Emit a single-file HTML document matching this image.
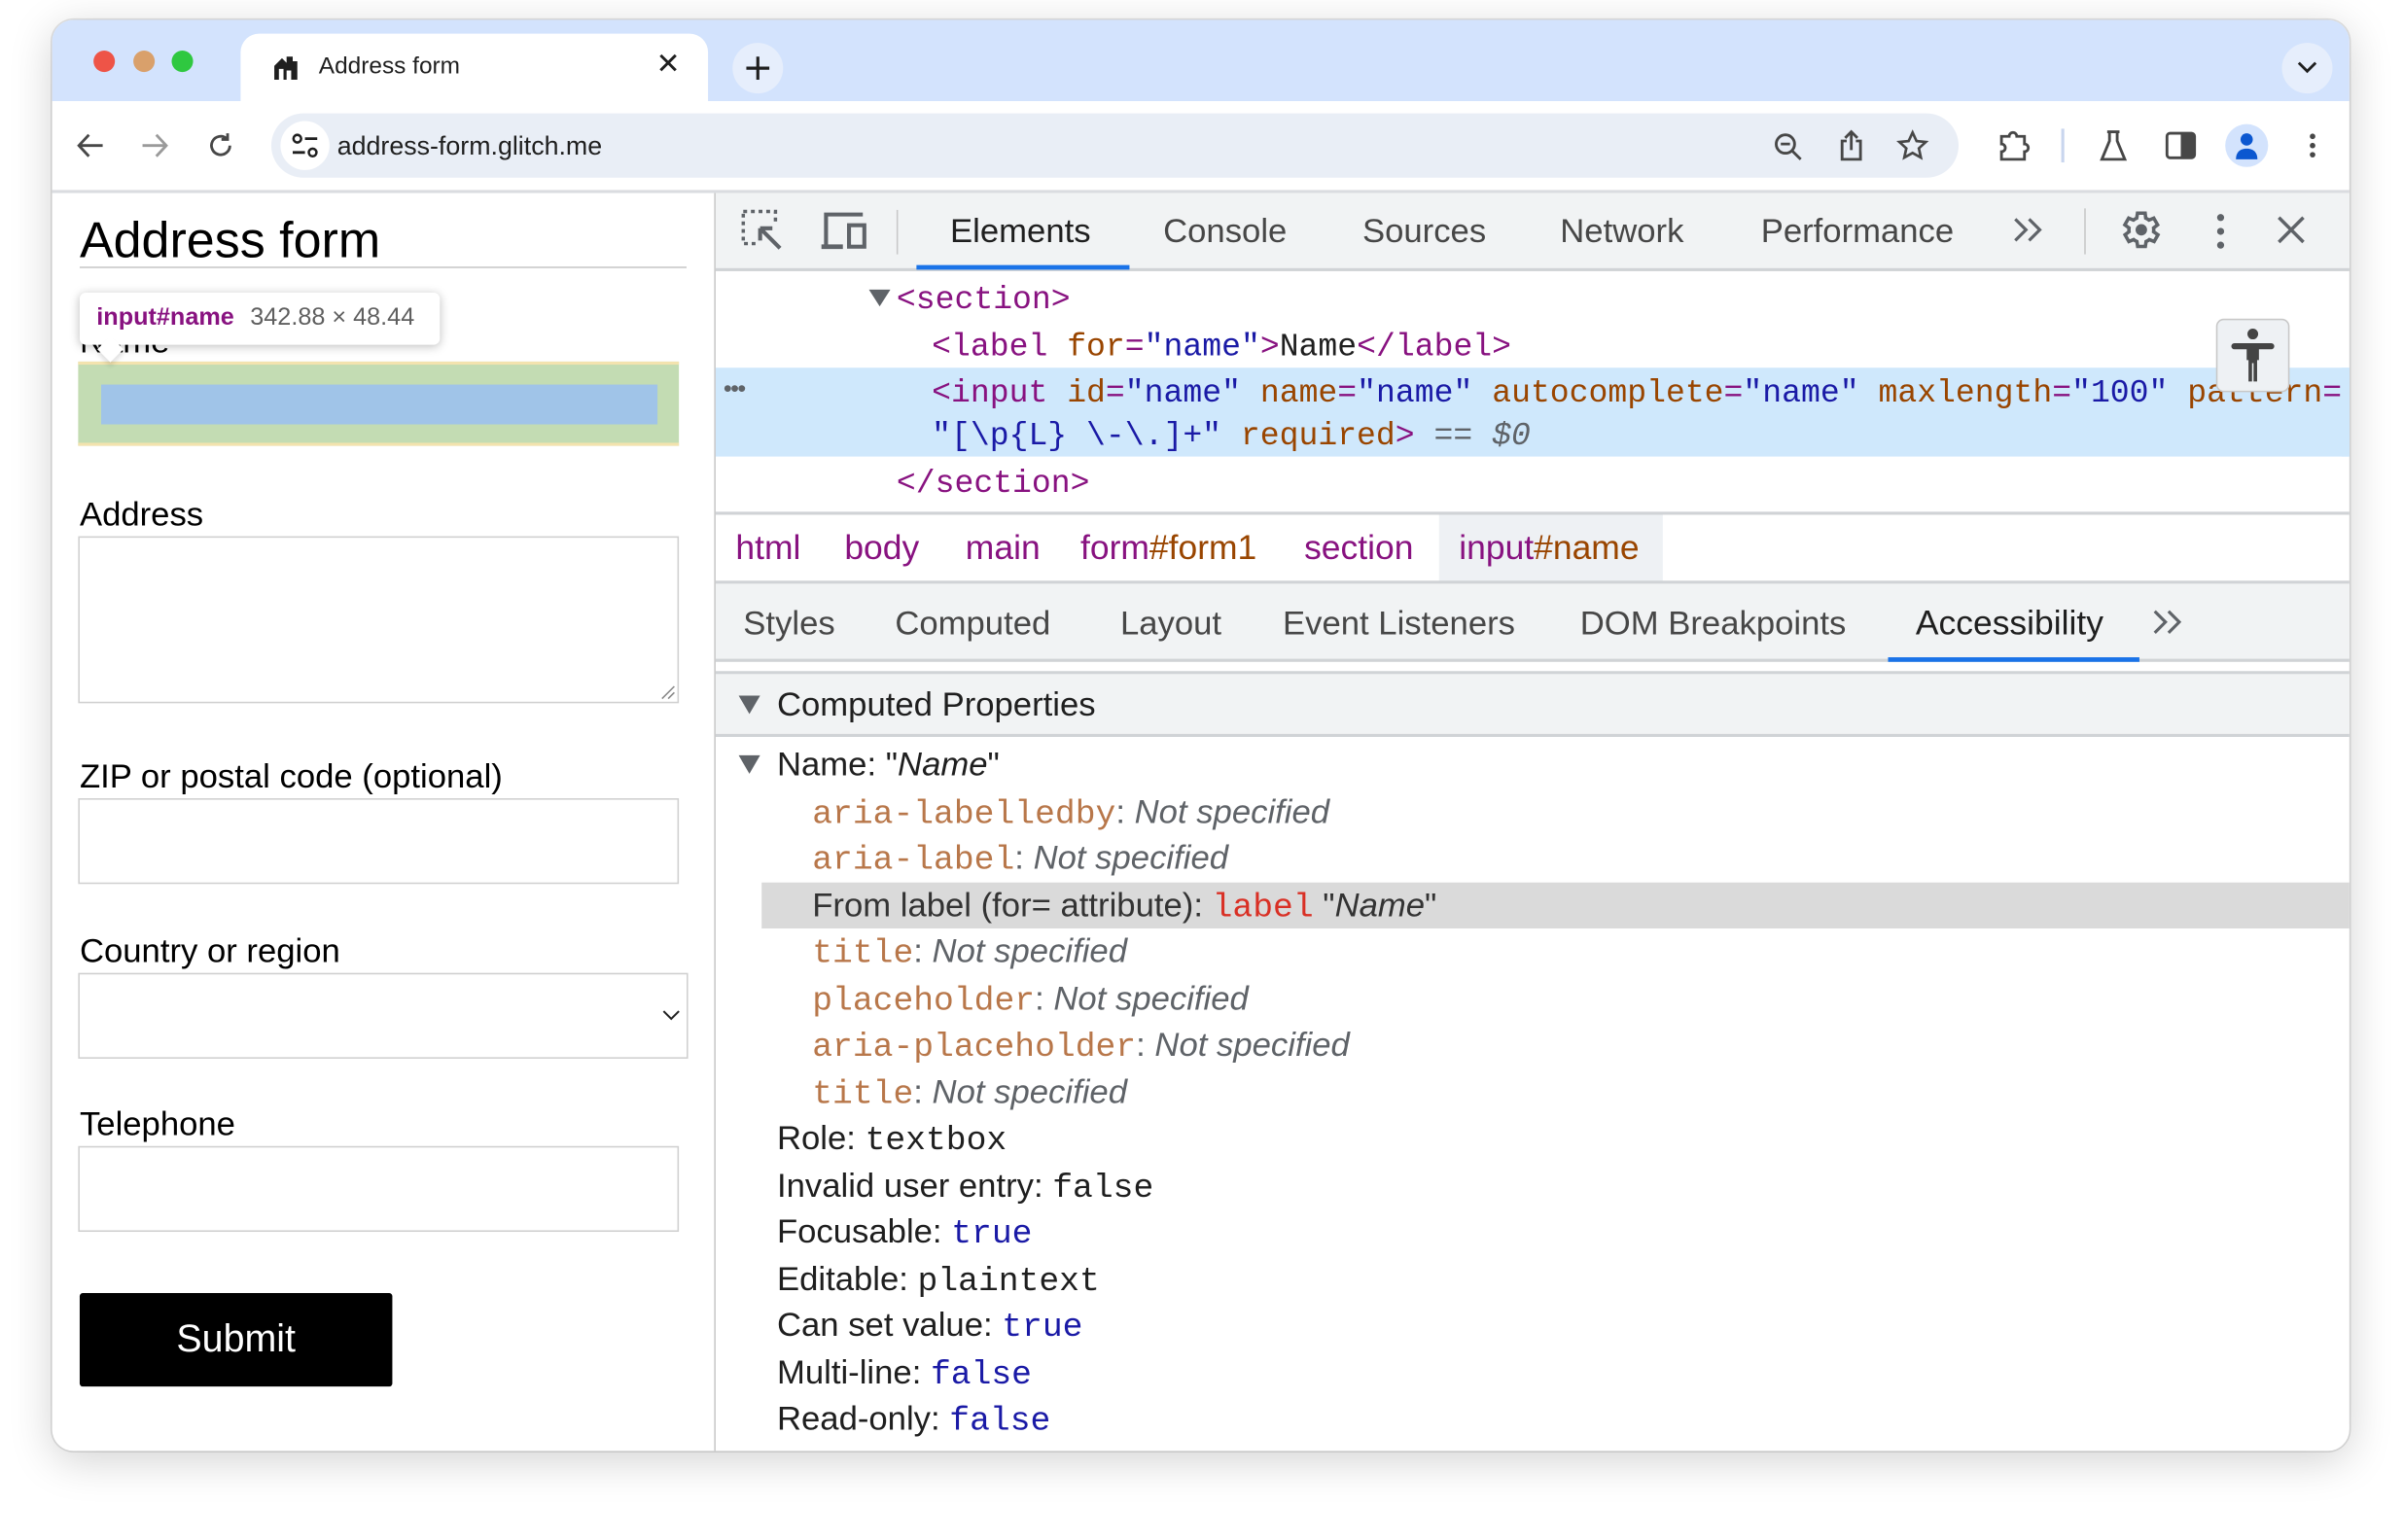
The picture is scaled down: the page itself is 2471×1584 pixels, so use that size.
<!DOCTYPE html>
<html><head><meta charset="utf-8">
<style>
html,body{margin:0;padding:0;background:#fff;width:2471px;height:1583px;overflow:hidden}
#s{position:absolute;left:0;top:0;width:1568px;height:1005px;transform:scale(1.57589);transform-origin:0 0;font-family:"Liberation Sans",Arial,sans-serif}
.a{position:absolute;white-space:nowrap}
.m{font-family:"Liberation Mono","DejaVu Sans Mono",monospace}
.tg{color:#881280}.an{color:#994500}.av{color:#1a1aa6}
.pn{color:#b8774a}.ns{color:#5f6368;font-style:italic}
.bl{color:#1a1aa6}
.dt{color:#474747;font-size:22px;line-height:30px}
.row{font-size:22px;line-height:30px;color:#1f1f1f}
.bc{font-size:22.5px;line-height:30px;top:343px}
.inp{position:absolute;border:1px solid #d0d0d0;background:#fff}
.lbl{position:absolute;font-size:22px;color:#000;line-height:26px}
svg{position:absolute;overflow:visible}
</style></head><body>
<div id="s">
<div class="a" style="left:34px;top:13px;width:1499px;height:934px;border-radius:14px;background:#fff;box-shadow:0 6px 28px rgba(0,0,0,.18),0 0 0 1px #e3e3e3;overflow:hidden">
 <div class="a" style="left:0;top:0;width:1499px;height:53px;background:#d3e3fd"></div>
</div>
<div class="a" style="left:61px;top:33px;width:14px;height:14px;border-radius:50%;background:#ee5447"></div>
<div class="a" style="left:87px;top:33px;width:14px;height:14px;border-radius:50%;background:#d9a06b"></div>
<div class="a" style="left:112px;top:33px;width:14px;height:14px;border-radius:50%;background:#2fc840"></div>
<div class="a" style="left:157px;top:22px;width:305px;height:46px;background:#fff;border-radius:12px 12px 0 0"></div>
<svg style="left:178px;top:35px" width="18" height="18" viewBox="0 0 18 18"><path d="M1 17V8l5-5 3 3V2h4v3h3v12h-4v-6H9v6H7v-7H4v7z" fill="#1f1f1f"/></svg>
<div class="a" style="left:208px;top:35px;font-size:15.5px;line-height:18px;color:#1f1f1f">Address form</div>
<div class="a" style="left:428px;top:32px;font-size:19px;line-height:22px;color:#1f1f1f">✕</div>
<div class="a" style="left:478px;top:28px;width:33px;height:33px;border-radius:50%;background:#e6eefc"></div>
<svg style="left:486px;top:36px" width="17" height="17"><path d="M8.5 1v15M1 8.5h15" stroke="#1f1f1f" stroke-width="2"/></svg>
<div class="a" style="left:1489px;top:28px;width:33px;height:33px;border-radius:50%;background:#e6eefc"></div>
<svg style="left:1499px;top:40px" width="13" height="8"><path d="M1 1l5.5 5.5L12 1" stroke="#1f1f1f" stroke-width="1.8" fill="none"/></svg>
<svg style="left:50px;top:86px" width="18" height="18"><path d="M17 9H2M8 2L1.5 9 8 16" stroke="#474747" stroke-width="1.8" fill="none"/></svg>
<svg style="left:92px;top:86px" width="18" height="18"><path d="M1 9h15M10 2l6.5 7L10 16" stroke="#9a9a9a" stroke-width="1.8" fill="none"/></svg>
<svg style="left:135px;top:86px" width="18" height="18"><path d="M15 9A6 6 0 1 1 13 4.5M13.5 1v4h-4" stroke="#474747" stroke-width="1.8" fill="none"/></svg>
<div class="a" style="left:177px;top:74px;width:1101px;height:42px;border-radius:21px;background:#e9eef6"></div>
<div class="a" style="left:183px;top:79px;width:32px;height:32px;border-radius:50%;background:#fff"></div>
<svg style="left:190px;top:87px" width="18" height="16"><circle cx="4" cy="3.5" r="2.5" stroke="#1f1f1f" stroke-width="1.6" fill="none"/><path d="M9 3.5h8M1 12.5h8" stroke="#1f1f1f" stroke-width="1.8"/><circle cx="14" cy="12.5" r="2.5" stroke="#1f1f1f" stroke-width="1.6" fill="none"/></svg>
<div class="a" style="left:220px;top:86px;font-size:17px;line-height:20px;color:#1f1f1f">address-form.glitch.me</div>
<svg style="left:1157px;top:86px" width="20" height="20"><circle cx="8" cy="8" r="6" stroke="#474747" stroke-width="1.8" fill="none"/><path d="M12.5 12.5L18 18M5 8h6" stroke="#474747" stroke-width="1.8"/></svg>
<svg style="left:1199px;top:84px" width="18" height="22"><path d="M6 8H3v12h12V8h-3M9 14V2M5 6l4-4 4 4" stroke="#474747" stroke-width="1.8" fill="none"/></svg>
<svg style="left:1238px;top:85px" width="20" height="20"><path d="M10 1.5l2.6 5.6 6 .6-4.5 4.1 1.3 6L10 14.8 4.6 17.8l1.3-6L1.4 7.7l6-.6z" stroke="#474747" stroke-width="1.7" fill="none"/></svg>
<svg style="left:1303px;top:84px" width="22" height="22"><path d="M2 5h5a2.5 2.5 0 0 1 5 0h5v5a2.5 2.5 0 0 1 0 5v5H2v-5a2.5 2.5 0 0 0 0-5z" stroke="#474747" stroke-width="1.8" fill="none" transform="translate(1,0)"/></svg>
<div class="a" style="left:1345px;top:84px;width:2px;height:22px;background:#c9d6ee"></div>
<svg style="left:1370px;top:85px" width="18" height="20"><path d="M5 1h8M6.5 1v6L1.5 19h15L11.5 7V1" stroke="#474747" stroke-width="1.8" fill="none"/></svg>
<svg style="left:1413px;top:86px" width="20" height="18"><rect x="1" y="1" width="18" height="16" rx="2" stroke="#474747" stroke-width="1.8" fill="none"/><rect x="10" y="1" width="9" height="16" fill="#474747"/></svg>
<div class="a" style="left:1452px;top:81px;width:28px;height:28px;border-radius:50%;background:#d3e3fd"></div>
<svg style="left:1456px;top:85px" width="20" height="20"><circle cx="10" cy="6" r="4" fill="#0b57d0"/><path d="M3 19c0-5 3-7 7-7s7 2 7 7z" fill="#0b57d0"/></svg>
<svg style="left:1505px;top:86px" width="8" height="20"><circle cx="4" cy="3" r="1.8" fill="#474747"/><circle cx="4" cy="9" r="1.8" fill="#474747"/><circle cx="4" cy="15" r="1.8" fill="#474747"/></svg>
<div class="a" style="left:34px;top:124px;width:1499px;height:2px;background:#dadce0"></div>

<div class="a" style="left:52px;top:137px;font-size:33px;line-height:40px;color:#000">Address form</div>
<div class="a" style="left:52px;top:174px;width:396px;height:1px;background:#c8c8c8"></div>
<div class="lbl" style="left:52px;top:210px">Name</div>
<div class="a" style="left:51px;top:236px;width:392px;height:55px;background:#c3dcb3;border-top:2px solid #f3e3ae;border-bottom:2px solid #f3e3ae;box-sizing:border-box"></div>
<div class="a" style="left:66px;top:251px;width:363px;height:26px;background:#a0c4e8"></div>
<div class="a" style="left:52px;top:191px;width:235px;height:34px;background:#fff;border-radius:4px;box-shadow:0 1px 6px rgba(0,0,0,.25)"></div>
<div class="a" style="left:66px;top:222px;width:12px;height:12px;background:#fff;transform:rotate(45deg);box-shadow:2px 2px 3px rgba(0,0,0,.12)"></div>
<div class="a" style="left:63px;top:199px;font-size:16px;line-height:18px"><b style="color:#881280">input#name</b> <span style="color:#5f5f5f;margin-left:6px">342.88 × 48.44</span></div>
<div class="lbl" style="left:52px;top:323px">Address</div>
<div class="inp" style="left:51px;top:350px;width:390px;height:107px"></div>
<svg style="left:431px;top:447px" width="10" height="10"><path d="M1 9l8-8M5 9l4-4" stroke="#888" stroke-width="1"/></svg>
<div class="lbl" style="left:52px;top:494px">ZIP or postal code (optional)</div>
<div class="inp" style="left:51px;top:521px;width:390px;height:54px"></div>
<div class="lbl" style="left:52px;top:608px">Country or region</div>
<div class="inp" style="left:51px;top:635px;width:396px;height:54px"></div>
<svg style="left:432px;top:659px" width="12" height="7"><path d="M1 1l5 5 5-5" stroke="#222" stroke-width="1.3" fill="none"/></svg>
<div class="lbl" style="left:52px;top:721px">Telephone</div>
<div class="inp" style="left:51px;top:748px;width:390px;height:54px"></div>
<div class="a" style="left:52px;top:844px;width:204px;height:61px;background:#000;border-radius:2px;color:#fff;font-size:25px;line-height:61px;text-align:center">Submit</div>

<div class="a" style="left:466px;top:126px;width:1px;height:821px;background:#c8c8c8"></div>
<div class="a" style="left:467px;top:126px;width:1066px;height:50px;background:#f1f3f4"></div>
<div class="a" style="left:467px;top:175px;width:1066px;height:2px;background:#d0d3d6"></div>
<svg style="left:484px;top:137px" width="28" height="28"><rect x="1" y="1" width="21" height="21" stroke="#5f6368" stroke-width="2.2" stroke-dasharray="2.5 2.5" fill="none"/><rect x="9" y="9" width="18" height="18" fill="#f1f3f4"/><path d="M12 12l13 13M12 12v8M12 12h8" stroke="#5f6368" stroke-width="2.6" fill="none"/></svg>
<svg style="left:536px;top:138px" width="32" height="26"><path d="M3 23V2h24" stroke="#5f6368" stroke-width="2.6" fill="none"/><path d="M0 23h14" stroke="#5f6368" stroke-width="3"/><rect x="18" y="9" width="10" height="14" stroke="#5f6368" stroke-width="2.6" fill="none"/></svg>
<div class="a" style="left:585px;top:137px;width:1px;height:29px;background:#c8c8c8"></div>
<div class="a dt" style="left:620px;top:136px;color:#1f1f1f">Elements</div>
<div class="a" style="left:598px;top:173px;width:139px;height:3px;background:#1a73e8"></div>
<div class="a dt" style="left:759px;top:136px">Console</div>
<div class="a dt" style="left:889px;top:136px">Sources</div>
<div class="a dt" style="left:1018px;top:136px">Network</div>
<div class="a dt" style="left:1149px;top:136px">Performance</div>
<svg style="left:1313px;top:141px" width="22" height="18"><path d="M2 2l7 7-7 7M11 2l7 7-7 7" stroke="#5f6368" stroke-width="2" fill="none"/></svg>
<div class="a" style="left:1360px;top:136px;width:1px;height:30px;background:#c8c8c8"></div>
<svg style="left:1381px;top:135px" width="30" height="30" viewBox="0 0 24 24"><path d="M19.4 13a7.5 7.5 0 0 0 0-2l2.1-1.6-2-3.5-2.5 1a7 7 0 0 0-1.7-1L15 3.3h-4l-.4 2.6a7 7 0 0 0-1.7 1l-2.5-1-2 3.5L6.6 11a7.5 7.5 0 0 0 0 2l-2.1 1.6 2 3.5 2.5-1a7 7 0 0 0 1.7 1l.4 2.6h4l.4-2.6a7 7 0 0 0 1.7-1l2.5 1 2-3.5z" stroke="#5f6368" stroke-width="1.8" fill="none"/><circle cx="13" cy="12" r="3" fill="#5f6368"/></svg>
<svg style="left:1445px;top:138px" width="8" height="26"><circle cx="4" cy="4" r="2.3" fill="#5f6368"/><circle cx="4" cy="13" r="2.3" fill="#5f6368"/><circle cx="4" cy="22" r="2.3" fill="#5f6368"/></svg>
<svg style="left:1485px;top:140px" width="20" height="20"><path d="M2 2l16 16M18 2L2 18" stroke="#5f6368" stroke-width="2.2"/></svg>

<div class="a" style="left:467px;top:240px;width:1066px;height:58px;background:#cfe8fc"></div>
<div class="a" style="left:472px;top:246px;font-size:16px;color:#5f6368;letter-spacing:-1px">•••</div>
<svg style="left:567px;top:189px" width="14" height="12"><path d="M0 0h14L7 11z" fill="#5f6368"/></svg>
<div class="a m" style="left:585px;top:183px;font-size:21px;line-height:28px"><span class="tg">&lt;section&gt;</span></div>
<div class="a m" style="left:608px;top:214px;font-size:21px;line-height:28px"><span class="tg">&lt;label</span> <span class="an">for</span><span class="tg">=</span><span class="av">"name"</span><span class="tg">&gt;</span><span style="color:#1f1f1f">Name</span><span class="tg">&lt;/label&gt;</span></div>
<div class="a m" style="left:608px;top:244px;font-size:21px;line-height:28px"><span class="tg">&lt;input</span> <span class="an">id</span><span class="tg">=</span><span class="av">"name"</span> <span class="an">name</span><span class="tg">=</span><span class="av">"name"</span> <span class="an">autocomplete</span><span class="tg">=</span><span class="av">"name"</span> <span class="an">maxlength</span><span class="tg">=</span><span class="av">"100"</span> <span class="an">pattern</span><span class="tg">=</span></div>
<div class="a m" style="left:608px;top:272px;font-size:21px;line-height:28px"><span class="av">"[\p{L} \-\.]+"</span> <span class="an">required</span><span class="tg">&gt;</span> <span style="color:#5f6368">==</span> <span style="color:#5f6368;font-style:italic">$0</span></div>
<div class="a m" style="left:585px;top:303px;font-size:21px;line-height:28px"><span class="tg">&lt;/section&gt;</span></div>
<div class="a" style="left:1446px;top:208px;width:48px;height:48px;background:#eef1f4;border:1.5px solid #c8c8c8;border-radius:5px;box-sizing:border-box"></div>
<svg style="left:1455px;top:213px" width="30" height="38"><circle cx="15" cy="5" r="3.5" fill="#444"/><path d="M3 13h24" stroke="#444" stroke-width="4" stroke-linecap="round"/><path d="M11 12h8v10h-1.2v14h-2.3V24h-1v12h-2.3V22H11z" fill="#444"/></svg>
<div class="a" style="left:1528px;top:240px;width:5px;height:58px;background:#cfe8fc"></div>

<div class="a" style="left:467px;top:334px;width:1066px;height:2px;background:#d0d3d6"></div>
<div class="a" style="left:939px;top:336px;width:146px;height:44px;background:#eef1f4"></div>
<div class="a bc tg" style="left:480px">html</div>
<div class="a bc tg" style="left:551px">body</div>
<div class="a bc tg" style="left:630px">main</div>
<div class="a bc" style="left:705px"><span class="tg">form</span><span class="an">#form1</span></div>
<div class="a bc tg" style="left:851px">section</div>
<div class="a bc" style="left:952px"><span class="tg">input</span><span class="an">#name</span></div>
<div class="a" style="left:467px;top:379px;width:1066px;height:2px;background:#d0d3d6"></div>
<div class="a" style="left:467px;top:381px;width:1066px;height:50px;background:#f1f3f4"></div>
<div class="a" style="left:467px;top:430px;width:1066px;height:2px;background:#d0d3d6"></div>
<div class="a dt" style="left:485px;top:392px">Styles</div>
<div class="a dt" style="left:584px;top:392px">Computed</div>
<div class="a dt" style="left:731px;top:392px">Layout</div>
<div class="a dt" style="left:837px;top:392px">Event Listeners</div>
<div class="a dt" style="left:1031px;top:392px">DOM Breakpoints</div>
<div class="a dt" style="left:1250px;top:392px;color:#1f1f1f;font-size:22.5px">Accessibility</div>
<div class="a" style="left:1232px;top:429px;width:164px;height:3px;background:#1a73e8"></div>
<svg style="left:1404px;top:397px" width="22" height="18"><path d="M2 2l7 7-7 7M11 2l7 7-7 7" stroke="#5f6368" stroke-width="2" fill="none"/></svg>

<div class="a" style="left:467px;top:438px;width:1066px;height:2px;background:#d0d3d6"></div>
<div class="a" style="left:467px;top:440px;width:1066px;height:39px;background:#f1f3f4"></div>
<div class="a" style="left:467px;top:479px;width:1066px;height:2px;background:#d0d3d6"></div>
<svg style="left:482px;top:454px" width="14" height="12"><path d="M0 0h14L7 12z" fill="#5f6368"/></svg>
<div class="a row" style="left:507px;top:445px">Computed Properties</div>
<svg style="left:482px;top:493px" width="14" height="12"><path d="M0 0h14L7 12z" fill="#5f6368"/></svg>
<div class="a row" style="left:507px;top:484px">Name: "<i>Name</i>"</div>
<div class="a" style="left:497px;top:576px;width:1036px;height:30px;background:#dadada"></div>
<div class="a row" style="left:530px;top:515px"><span class="m pn">aria-labelledby</span><span style="color:#5f6368">:</span> <span class="ns">Not specified</span></div>
<div class="a row" style="left:530px;top:545px"><span class="m pn">aria-label</span><span style="color:#5f6368">:</span> <span class="ns">Not specified</span></div>
<div class="a row" style="left:530px;top:576px;color:#333">From label (for= attribute): <span class="m" style="color:#d93025">label</span> "<i>Name</i>"</div>
<div class="a row" style="left:530px;top:606px"><span class="m pn">title</span><span style="color:#5f6368">:</span> <span class="ns">Not specified</span></div>
<div class="a row" style="left:530px;top:637px"><span class="m pn">placeholder</span><span style="color:#5f6368">:</span> <span class="ns">Not specified</span></div>
<div class="a row" style="left:530px;top:667px"><span class="m pn">aria-placeholder</span><span style="color:#5f6368">:</span> <span class="ns">Not specified</span></div>
<div class="a row" style="left:530px;top:698px"><span class="m pn">title</span><span style="color:#5f6368">:</span> <span class="ns">Not specified</span></div>
<div class="a row" style="left:507px;top:728px">Role: <span class="m">textbox</span></div>
<div class="a row" style="left:507px;top:759px">Invalid user entry: <span class="m">false</span></div>
<div class="a row" style="left:507px;top:789px">Focusable: <span class="m bl">true</span></div>
<div class="a row" style="left:507px;top:820px">Editable: <span class="m">plaintext</span></div>
<div class="a row" style="left:507px;top:850px">Can set value: <span class="m bl">true</span></div>
<div class="a row" style="left:507px;top:881px">Multi-line: <span class="m bl">false</span></div>
<div class="a row" style="left:507px;top:911px">Read-only: <span class="m bl">false</span></div>
</div>
</body></html>
